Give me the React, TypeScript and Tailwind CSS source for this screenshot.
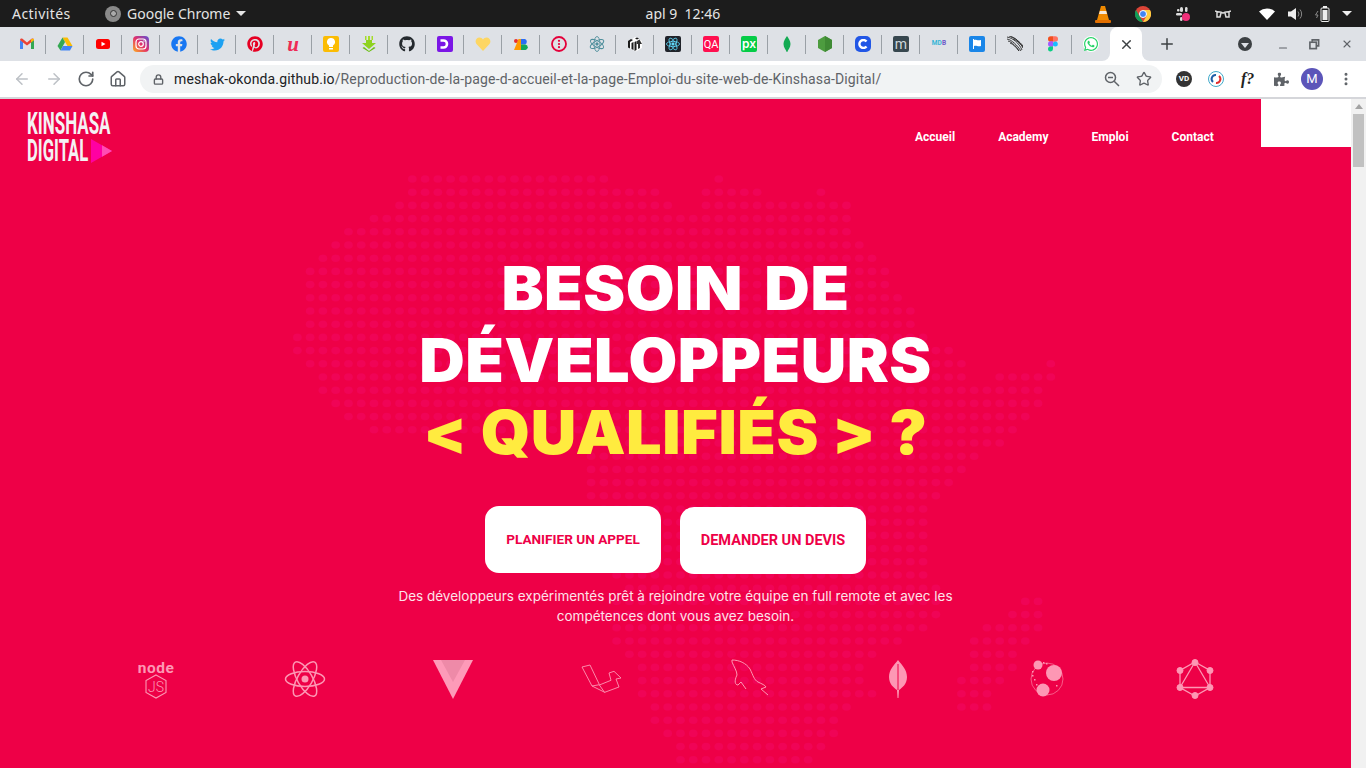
import type { ReactNode } from "react";
import { ArrowLeft, ArrowRight, RotateCw, House, Lock, Star, X, Plus, Minus, EllipsisVertical } from "lucide-react";
import { FaFacebook, FaTwitter, FaPinterest, FaGithub, FaWhatsapp, FaPuzzlePiece } from "react-icons/fa";

// [row index, start column, end column] for the dotted world map behind the hero
const dotRows: number[][] = [
  [0, 0, 15], [0, 24, 24],
  [1, 0, 19], [1, 23, 27], [1, 32, 32],
  [2, -1, 20], [2, 23, 34],
  [3, -3, 34], [4, -5, 34], [5, -6, 35], [6, -7, 36], [7, -8, 37], [8, -8, 37], [9, -8, 38],
  [10, -8, 39], [11, -8, 39], [12, -9, 40], [13, -9, 42],
  [14, -8, 43], [14, 50, 50],
  [15, -7, 43], [15, 46, 50],
  [16, -7, 49], [17, -6, 49], [18, -5, 48], [19, -3, 47], [20, 14, 46], [21, 14, 44], [22, 14, 43], [23, 14, 42], [24, 14, 41],
  [25, 15, 40], [26, 15, 40], [27, 16, 40], [28, 16, 40], [29, 16, 40], [30, 16, 40],
  [31, 17, 41],
  [32, 16, 41], [32, 48, 49],
  [33, 15, 41], [33, 47, 49],
  [34, 16, 40], [34, 45, 49],
  [35, 16, 38], [35, 44, 48],
  [36, 17, 36], [36, 44, 47],
  [37, 18, 35], [37, 44, 47],
  [38, 18, 35], [38, 43, 46],
  [39, 18, 36], [39, 43, 45],
  [40, 19, 34], [40, 43, 45],
  [41, 19, 33], [42, 20, 33], [43, 21, 32], [44, 21, 31],
];

function DotMap() {
  const dots: ReactNode[] = [];
  dotRows.forEach(([row, from, to]) => {
    for (let k = from; k <= to; k++) {
      dots.push(<ellipse key={`${row}-${k}`} cx={412.3 + k * 12.77} cy={80 + row * 13.2} rx={4.4} ry={3.8} />);
    }
  });
  return (
    <svg className="absolute left-0 top-0" width="1351" height="669" fill="#f00456">
      {dots}
    </svg>
  );
}

const Box = ({ children, bg }: { children: ReactNode; bg: string }) => (
  <span className={`flex h-4 w-4 items-center justify-center overflow-hidden rounded-[2px] ${bg}`}>{children}</span>
);

const favicons: ReactNode[] = [
  <svg key="gmail" width="16" height="16" viewBox="0 0 16 16">
    <path d="M1 13V4l3 2v7z" fill="#4285f4" />
    <path d="M12 13V6l3-2v9z" fill="#34a853" />
    <path d="M1 4c0-1.500 1.500-2 2.500-1.200L8 6.500l4.500-3.700C13.500 2 15 2.500 15 4l-3 2.500-4 3-4-3z" fill="#ea4335" />
    <path d="M12 3.200 15 2.800V4l-3 2.500z" fill="#fbbc04" />
  </svg>,
  <svg key="drive" width="16" height="16" viewBox="0 0 16 16">
    <path d="M5.500 1.500h5L15.500 10h-5z" fill="#fbbc04" />
    <path d="M5.500 1.500 8 6 3.500 14.500.5 10z" fill="#34a853" />
    <path d="M3.500 14.500 6 10h9.500L13 14.500z" fill="#4285f4" />
  </svg>,
  <svg key="yt" width="16" height="16" viewBox="0 0 16 16">
    <rect x="1" y="3" width="14" height="10" rx="2.500" fill="#f00" />
    <path d="M6.500 5.800v4.400L10.500 8z" fill="#fff" />
  </svg>,
  <svg key="ig" width="16" height="16" viewBox="0 0 16 16">
    <defs>
      <linearGradient id="ig" x1="0" y1="1" x2="1" y2="0">
        <stop offset="0" stopColor="#fdb022" />
        <stop offset="0.5" stopColor="#e1306c" />
        <stop offset="1" stopColor="#5b51d8" />
      </linearGradient>
    </defs>
    <rect width="16" height="16" rx="4" fill="url(#ig)" />
    <rect x="3" y="3" width="10" height="10" rx="3" fill="none" stroke="#fff" strokeWidth="1.200" />
    <circle cx="8" cy="8" r="2.300" fill="none" stroke="#fff" strokeWidth="1.200" />
    <circle cx="11" cy="5" r=".7" fill="#fff" />
  </svg>,
  <FaFacebook key="fb" size={16} color="#1877f2" />,
  <FaTwitter key="tw" size={15} color="#1da1f2" />,
  <FaPinterest key="pin" size={16} color="#e60023" />,
  <span key="u" className="font-['Liberation_Serif',serif] text-[21px] font-bold italic leading-4 text-[#ee2b55]">u</span>,
  <Box key="keep" bg="bg-[#fbbc04]">
    <svg width="10" height="12" viewBox="0 0 10 12" fill="#fff">
      <path d="M5 0a4 4 0 0 0-2 7.500V9h4V7.500A4 4 0 0 0 5 0zM3 10h4v1.500H3z" />
    </svg>
  </Box>,
  <svg key="dl" width="16" height="16" viewBox="0 0 16 16">
    <path d="M4 0h1.500v4H4zM7 0h2v4H7zM10.500 0H12v4h-1.500z" fill="#a6dc2c" />
    <path d="M5 4h6v3h4l-7 6-7-6h4z" fill="#8ed21f" />
    <path d="M3 11l5 4 5-4 1.500 1L8 16l-6.500-4z" fill="#6cbf12" />
  </svg>,
  <FaGithub key="gh" size={16} color="#24292e" />,
  <Box key="dp" bg="bg-[#7b16e6]">
    <svg width="12" height="12" viewBox="0 0 12 12" fill="none" stroke="#fff" strokeWidth="2.600">
      <path d="M1.500 2.500h3a3.500 3.500 0 0 1 0 7h-3" />
    </svg>
  </Box>,
  <svg key="heart" width="16" height="16" viewBox="0 0 16 16">
    <path d="M8 15 1.500 8C-.5 5.500 1 1.500 4.500 1.500 6 1.500 7.300 2.300 8 3.500 8.700 2.300 10 1.500 11.500 1.500 15 1.500 16.500 5.500 14.500 8z" fill="#fdd663" />
  </svg>,
  <svg key="jb" width="16" height="16" viewBox="0 0 16 16">
    <circle cx="3" cy="5" r="2" fill="#ea2e2e" />
    <path d="M1 14 5.500 3H8v11z" fill="#ff9a00" />
    <path d="M8 3h4a3 3 0 0 1 0 5.500H8z" fill="#2a6df4" />
    <path d="M8 8.500h4.500a2.800 2.800 0 0 1 0 5.500H8z" fill="#13a85c" />
  </svg>,
  <svg key="opt" width="16" height="16" viewBox="0 0 16 16">
    <circle cx="8" cy="8" r="7" fill="none" stroke="#e4003a" strokeWidth="1.800" />
    <circle cx="8" cy="4.800" r="1.100" fill="#e4003a" />
    <circle cx="8" cy="8" r="1.100" fill="#e4003a" />
    <circle cx="8" cy="11.200" r="1.100" fill="#e4003a" />
  </svg>,
  <svg key="electron" width="16" height="16" viewBox="0 0 16 16" fill="none" stroke="#4f8f9c" strokeWidth=".9">
    <ellipse cx="8" cy="8" rx="7.500" ry="3" transform="rotate(30 8 8)" />
    <ellipse cx="8" cy="8" rx="7.500" ry="3" transform="rotate(-30 8 8)" />
    <ellipse cx="8" cy="8" rx="7.500" ry="3" transform="rotate(90 8 8)" />
    <circle cx="8" cy="8" r="1.200" fill="#4f8f9c" />
  </svg>,
  <svg key="cube" width="16" height="16" viewBox="0 0 16 16">
    <path d="M8 1 15 5v7l-6 3.500L2 12l-1-6z" fill="#fff" />
    <path d="M1 5l3-2 2 1-3 2v6.500L1 11.500zM4.500 7l2-1v8l-2-1zM8 2.500l2-1 2 1-2 1zM7.500 6l2-1v9l-2 1z" fill="#1b1b1b" />
    <path d="M10 5l2.500-1.500L15 8h-2v4l-2 1V8H9.500z" fill="#333" />
  </svg>,
  <Box key="react" bg="bg-[#20232a]">
    <svg width="14" height="14" viewBox="0 0 16 16" fill="none" stroke="#61dafb" strokeWidth=".9">
      <ellipse cx="8" cy="8" rx="7.500" ry="3" />
      <ellipse cx="8" cy="8" rx="7.500" ry="3" transform="rotate(60 8 8)" />
      <ellipse cx="8" cy="8" rx="7.500" ry="3" transform="rotate(120 8 8)" />
      <circle cx="8" cy="8" r="1.400" fill="#61dafb" />
    </svg>
  </Box>,
  <Box key="qa" bg="bg-[#ff0f4f]">
    <span className="font-['Roboto',sans-serif] text-[11px] leading-none text-white">QA</span>
  </Box>,
  <Box key="px" bg="bg-[#05cc47]">
    <span className="font-['Inter',sans-serif] text-[12px] font-semibold leading-none text-white">px</span>
  </Box>,
  <svg key="leaf" width="16" height="16" viewBox="0 0 16 16">
    <path d="M8 0c1.500 2.500 3.500 4.500 3.500 8S9 13.500 8.300 16h-.6C7 13.500 4.500 11.500 4.500 8S6.500 2.500 8 0z" fill="#13aa52" />
  </svg>,
  <svg key="hex" width="16" height="16" viewBox="0 0 16 16">
    <path d="M8 0l7 4v8l-7 4-7-4V4z" fill="#4d9c3f" />
    <path d="M8 0l7 4v8l-7 4z" fill="#3f8a34" />
  </svg>,
  <span key="c" className="flex h-4 w-4 items-center justify-center rounded-[5px] bg-[#2257e6]">
    <svg width="10" height="10" viewBox="0 0 10 10" fill="none" stroke="#fff" strokeWidth="2.400">
      <path d="M8.500 2.500a4 4 0 1 0 0 5" />
    </svg>
  </span>,
  <Box key="m" bg="bg-[#37474f]">
    <span className="font-['Roboto',sans-serif] text-[14px] leading-3 text-[#cfd8dc]">m</span>
  </Box>,
  <span key="mdb" className="flex w-4 justify-center whitespace-nowrap font-['Roboto',sans-serif] text-[6.500px] font-bold tracking-[0.2px]">
    <span className="text-[#33b5d6]">MD</span>
    <span className="text-[#6f57c8]">B</span>
  </span>,
  <Box key="flag" bg="bg-[#1a86e8]">
    <svg width="12" height="12" viewBox="0 0 12 12" fill="#fff">
      <path d="M2 1h1v10H2zM3 2c2-1 3 1 7 0v6c-3 1-5-1-7 0z" />
    </svg>
  </Box>,
  <svg key="lines" width="16" height="16" viewBox="0 0 16 16" fill="none" stroke="#2b2b2b" strokeWidth=".9">
    <path d="M0 1c6 1 12 6 15 13M2 0c6 1 11 6 14 12M0 3c5 1 10 6 14 12M4 1c4 1 9 5 12 9M1 5c4 1 8 5 11 10M6 3c3 1 7 4 10 8M3 7c3 1 6 4 9 8" />
  </svg>,
  <svg key="figma" width="16" height="16" viewBox="0 0 16 16">
    <path d="M3 3a2.700 2.700 0 0 1 2.700-2.700H8v5.400H5.700A2.700 2.700 0 0 1 3 3z" fill="#f24e1e" />
    <path d="M8 .3h2.300a2.700 2.700 0 0 1 0 5.400H8z" fill="#ff7262" />
    <circle cx="10.300" cy="8" r="2.500" fill="#1abcfe" />
    <path d="M3 8a2.700 2.700 0 0 1 2.700-2.700H8v5.400H5.700A2.700 2.700 0 0 1 3 8z" fill="#a259ff" />
    <path d="M5.700 10.500H8V13a2.500 2.500 0 1 1-2.300-2.500z" fill="#0acf83" />
  </svg>,
  <span key="wa" className="flex h-4 w-4 items-center justify-center rounded-full bg-white">
    <FaWhatsapp size={16} color="#25d366" />
  </span>,
];

function TopBar() {
  return (
    <div className="grid h-[27px] grid-cols-[1fr_auto_1fr] items-center bg-[#1c1c1c] font-['Noto_Sans',sans-serif] text-[14px] text-[#e4e4e4]">
      <div className="flex items-center">
        <span className="ml-3 w-[58px] tracking-[0.45px]">Activités</span>
        <span className="ml-[35px] flex h-4 w-4 items-center justify-center rounded-full bg-[#8a8a8a]">
          <span className="h-[7px] w-[7px] rounded-full border border-[#333] bg-[#aaa]" />
        </span>
        <span className="ml-[6px]">Google Chrome</span>
        <span className="ml-[6px] h-0 w-0 border-x-[5px] border-t-[5px] border-x-transparent border-t-[#e4e4e4]" />
      </div>
      <div className="whitespace-pre">apl 9  12:46</div>
      <div className="flex items-center justify-end">
        {/* tray icons */}
        <svg className="mr-[24px]" width="16" height="18" viewBox="0 0 16 18">
          <path d="M6 1h4l4 14H2z" fill="#f08a00" />
          <path d="M4.800 6h6.400l.8 3H4z" fill="#f5e9d8" />
          <rect x="0" y="15" width="16" height="3" rx="1" fill="#e36f00" />
        </svg>
        <svg className="mr-[24px]" width="16" height="16" viewBox="0 0 16 16">
          <circle cx="8" cy="8" r="8" fill="#db4437" />
          <path d="M8 16a8 8 0 0 1-7-12l4 7z" fill="#0f9d58" />
          <path d="M8 4h7a8 8 0 0 1-7 12l3.500-6z" fill="#ffcd40" />
          <circle cx="8" cy="8" r="3.500" fill="#4285f4" stroke="#fff" />
        </svg>
        <svg className="mr-[24px]" width="16" height="16" viewBox="0 0 16 16">
          <rect x="5" y="1" width="3" height="5" rx="1.500" fill="#ddd" />
          <rect x="1" y="7" width="6" height="2.500" rx="1.200" fill="#ddd" />
          <rect x="2" y="3" width="2.500" height="2.500" rx="1" fill="#ddd" />
          <rect x="10" y="1" width="2.500" height="5" rx="1.200" fill="#ddd" />
          <rect x="5" y="11" width="2.500" height="4" rx="1.200" fill="#ddd" />
          <circle cx="11" cy="11" r="4" fill="#f0307a" />
        </svg>
        <svg className="mr-[28px]" width="16" height="10" viewBox="0 0 16 10" fill="none" stroke="#ddd" strokeWidth="1.500">
          <path d="M0 2c2 1 3 1 5 1 2 0 2 1 3 1s1-1 3-1c2 0 3 0 5-1M2 3v5h3l1-4M14 3v5h-3l-1-4" />
        </svg>
        <svg className="mr-[13px]" width="16" height="12" viewBox="0 0 16 12">
          <path d="M0 3.500a12 12 0 0 1 16 0L8 12z" fill="#fff" />
        </svg>
        <svg className="mr-[12px]" width="15" height="14" viewBox="0 0 15 14" fill="none">
          <path d="M0 4.500h3L8 1v12L3 9.500H0z" fill="#eee" />
          <path d="M10 4.500a4 4 0 0 1 0 5M12 2.500a7 7 0 0 1 0 9" stroke="#888" />
        </svg>
        <svg className="mr-[12px]" width="15" height="16" viewBox="0 0 15 16" fill="none">
          <path d="M3 5 0.500 9H3L1.500 12" stroke="#888" />
          <rect x="6" y="2" width="8" height="13.500" rx="1" stroke="#eee" />
          <rect x="8" y="0" width="4" height="2" fill="#eee" />
          <rect x="7.500" y="4" width="5" height="10" fill="#eee" />
        </svg>
        <span className="mr-[14px] h-0 w-0 border-x-[5px] border-t-[5px] border-x-transparent border-t-[#eee]" />
      </div>
    </div>
  );
}

function TabStrip() {
  return (
    <div className="flex h-[34px] items-stretch bg-[#dee1e6] pl-2">
      {favicons.map((icon, i) => (
        <div key={i} className="relative flex w-[38px] items-center justify-center">
          {icon}
          {i < favicons.length - 1 && <span className="absolute right-0 top-2 h-[19px] w-px bg-[#9aa0a6]" />}
        </div>
      ))}
      <div className="relative flex w-[32px] items-center justify-center rounded-t-lg bg-white">
        {/* flared bottom corners */}
        <span className="absolute -left-2 bottom-0 h-2 w-2 bg-white">
          <span className="block h-2 w-2 rounded-br-lg bg-[#dee1e6]" />
        </span>
        <span className="absolute -right-2 bottom-0 h-2 w-2 bg-white">
          <span className="block h-2 w-2 rounded-bl-lg bg-[#dee1e6]" />
        </span>
        <X size={15} strokeWidth={2.200} color="#3c4043" />
      </div>
      <div className="ml-4 flex w-[18px] items-center justify-center">
        <Plus size={18} strokeWidth={2} color="#3c4043" />
      </div>
      <div className="ml-[62px] flex w-[14px] items-center">
        <span className="flex h-[14px] w-[14px] items-center justify-center rounded-full bg-[#3c4043]">
          <span className="mt-[2px] h-0 w-0 border-x-[4px] border-t-[5px] border-x-transparent border-t-[#dee1e6]" />
        </span>
      </div>
      <div className="ml-[25px] flex w-3 items-center pt-[8px]">
        <Minus size={14} strokeWidth={2.200} color="#5f6368" />
      </div>
      <div className="ml-[20px] flex w-3 items-center">
        <svg width="11" height="11" viewBox="0 0 12 12" fill="none" stroke="#5f6368" strokeWidth="1.800">
          <path d="M3.500 3V1h7v6.500H8" />
          <rect x="1" y="3.500" width="7" height="7" />
        </svg>
      </div>
      <div className="ml-[20px] flex w-3 items-center">
        <X size={16} strokeWidth={2.200} color="#5f6368" />
      </div>
    </div>
  );
}

function Toolbar() {
  return (
    <div className="flex h-[38px] items-center border-b-2 border-[#d5d6da] bg-white">
      <ArrowLeft className="ml-[13px]" size={18} strokeWidth={2} color="#bdc1c6" />
      <ArrowRight className="ml-[14px]" size={18} strokeWidth={2} color="#bdc1c6" />
      <RotateCw className="ml-[14px]" size={18} strokeWidth={2.200} color="#5f6368" />
      <House className="ml-[14px]" size={18} strokeWidth={2} color="#5f6368" />
      <div className="ml-[13px] flex h-7 w-[1022px] items-center rounded-full bg-[#f1f3f4]">
        <Lock className="ml-[13px]" size={11} strokeWidth={3} color="#5f6368" />
        <div className="ml-[10px] font-['Roboto',sans-serif] text-[14px] tracking-[0.14px] text-[#5f6368]">
          <span className="text-[#202124]">meshak-okonda.github.io</span>/Reproduction-de-la-page-d-accueil-et-la-page-Emploi-du-site-web-de-Kinshasa-Digital/
        </div>
        <div className="ml-auto flex items-center">
          <svg width="16" height="16" viewBox="0 0 16 16" fill="none" stroke="#5f6368" strokeWidth="1.500">
            <circle cx="6.500" cy="6.500" r="5" />
            <path d="M4 6.500h5M10.200 10.200 15 15" />
          </svg>
          <Star className="ml-4 mr-[10px]" size={16} strokeWidth={2} color="#5f6368" />
        </div>
      </div>
      <span className="ml-[14px] flex h-4 w-4 items-center justify-center rounded-full bg-[#333] font-['Roboto',sans-serif] text-[8px] font-bold text-white">VD</span>
      <svg className="ml-4" width="16" height="16" viewBox="0 0 16 16" fill="none">
        <circle cx="8" cy="8" r="7.500" stroke="#3fa9c9" />
        <path d="M5 11a4 4 0 0 1 3-7" stroke="#1f5fa8" strokeWidth="2" />
        <path d="M11 5a4 4 0 0 1-3 7" stroke="#e22d2d" strokeWidth="2" />
      </svg>
      <span className="ml-[17px] w-[15px] font-['Liberation_Serif',serif] text-[16px] font-bold italic text-[#222]">f?</span>
      <FaPuzzlePiece className="ml-[18px]" size={15} color="#5f6368" />
      <span className="ml-3 flex h-[22px] w-[22px] items-center justify-center rounded-full bg-[#5c55b9] font-['Roboto',sans-serif] text-[13px] text-white">M</span>
      <EllipsisVertical className="ml-[15px]" size={16} strokeWidth={2.500} color="#5f6368" />
    </div>
  );
}

const techIcons: ReactNode[] = [
  <svg key="node" width="40" height="40" viewBox="0 0 40 40" fill="none" stroke="#fd97b4">
    <text x="20" y="14" textAnchor="middle" fill="#fd97b4" stroke="none" fontFamily="Roboto, sans-serif" fontWeight="700" fontSize="15.500" letterSpacing="0.5">node</text>
    <path d="M20 16l10 5.500v12L20 39l-10-5.500v-12z" strokeWidth="1.100" />
    <text x="20" y="32.500" textAnchor="middle" fill="#fd97b4" stroke="none" fontFamily="Roboto, sans-serif" fontWeight="300" fontSize="14">JS</text>
  </svg>,
  <svg key="react" width="42" height="40" viewBox="0 0 42 40" fill="none" stroke="#fd97b4" strokeWidth="1.500">
    <ellipse cx="21" cy="20" rx="19.500" ry="7.500" />
    <ellipse cx="21" cy="20" rx="19.500" ry="7.500" transform="rotate(60 21 20)" />
    <ellipse cx="21" cy="20" rx="19.500" ry="7.500" transform="rotate(120 21 20)" />
    <circle cx="21" cy="20" r="3.500" fill="#fd97b4" stroke="none" />
  </svg>,
  <svg key="vue" width="40" height="40" viewBox="0 0 40 40">
    <path d="M0 1h40L20 40z" fill="#fd9ab8" />
    <path d="M8 1h24L20 23z" fill="#ee8aa8" />
  </svg>,
  <svg key="laravel" width="40" height="30" viewBox="0 0 40 30" fill="none" stroke="#fd97b4" strokeWidth=".9">
    <path d="M1 3l8-2 9.400 19.700L11 22zM11 22l12.700 6.300L38 23l-3-8 5-1-7-6.700-5 1.700 2 7.300-11.600 4.700 5.300 7.600" />
  </svg>,
  <svg key="mysql" width="40" height="40" viewBox="0 0 40 40" fill="none" stroke="#fd97b4" strokeWidth="1">
    <path d="M2 1C9 1 16 4 20 10c3 6 4 11 8 13 4 2 7 3 8 5l-5 2 7 6M2 1v2c2 5 5 9 5 13-3 6-2 10 1 10l3-3 5 7" />
  </svg>,
  <svg key="mongo" width="20" height="40" viewBox="0 0 20 40">
    <path d="M10 1c4 5 9 10 9 17 0 7-5 11-8 13l-.5 8h-1L9 31c-3-2-8-6-8-13C1 11 6 6 10 1z" fill="#fd97b4" />
    <path d="M10 5v26" stroke="#ee0047" strokeWidth="1" />
  </svg>,
  <svg key="apollo" width="40" height="40" viewBox="0 0 40 40" fill="#fd97b4">
    <circle cx="21" cy="20" r="16" fill="none" stroke="#fd97b4" strokeWidth=".6" />
    <circle cx="12" cy="6" r="4.500" />
    <circle cx="28" cy="14" r="8" />
    <circle cx="17" cy="31" r="6.500" />
    <path d="M6 12h1.500v1.500H6zM6 16h1.500v1.500H6zM8 20h1.500v1.500H8zM10 25h1.500v1.500H10zM17 3h1.500v1.500H17zM20 4h1.500v1.500H20zM30 26h1.500v1.500H30z" />
  </svg>,
  <svg key="graphql" width="40" height="40" viewBox="0 0 40 40" fill="#fd97b4" stroke="#fd97b4">
    <path d="M20 3l15 8.500v17L20 37 5 28.500v-17zM20 3l15 25.500H5z" fill="none" strokeWidth="1.300" />
    <circle cx="20" cy="3.500" r="3" />
    <circle cx="35" cy="11.500" r="3" />
    <circle cx="35" cy="28.500" r="3" />
    <circle cx="20" cy="36.500" r="3" />
    <circle cx="5" cy="28.500" r="3" />
    <circle cx="5" cy="11.500" r="3" />
  </svg>,
];

function Hero() {
  return (
    <main className="relative h-[669px] flex-1 overflow-hidden bg-[#ee0047]">
      <DotMap />
      <div className="absolute right-0 top-0 h-12 w-[90px] bg-white" />
      <div className="relative">
        <header className="flex h-12 items-start">
          <div className="ml-[27px] mt-[11px] w-[90px] font-['Roboto',sans-serif] text-[32px] font-bold leading-[27px] text-[#f4f1f3]">
            <div className="origin-left scale-x-[0.53] whitespace-nowrap">KINSHASA</div>
            <div className="flex items-center">
              <span className="w-[63px] origin-left scale-x-[0.52] whitespace-nowrap">DIGITAL</span>
              <svg className="ml-px" width="21" height="24" viewBox="0 0 21 24">
                <path d="M0 0l21 12L0 24z" fill="#ff00a2" />
                <path d="M11 6.300 21 12l-10 5.700z" fill="#ff4db4" />
              </svg>
            </div>
          </div>
          <nav className="ml-[798px] mt-[31px] flex gap-[43px] font-['Roboto',sans-serif] text-[12px] font-bold leading-[14px] text-white">
            <a>Accueil</a>
            <a>Academy</a>
            <a>Emploi</a>
            <a>Contact</a>
          </nav>
        </header>

        <h1 className="mt-[105px] scale-x-[1.05] text-center font-['Inter',sans-serif] text-[60px] font-black leading-[72px] tracking-[0.5px] text-white">
          <span className="[word-spacing:8px]">BESOIN DE</span>
          <br />
          DÉVELOPPEURS
          <br />
          <span className="text-[#ffeb3f]">&lt; QUALIFIÉS &gt; ?</span>
        </h1>

        <div className="mt-[38px] flex justify-center gap-[19px] font-['Roboto',sans-serif] font-bold text-[#ee0047]">
          <button className="h-[67px] w-[176px] rounded-[14px] bg-white text-[13.600px]">PLANIFIER UN APPEL</button>
          <button className="mt-px h-[67px] w-[186px] rounded-[14px] bg-white text-[14.500px]">DEMANDER UN DEVIS</button>
        </div>

        <p className="mt-[12px] text-center font-['Inter',sans-serif] text-[13.500px] leading-5 text-[#fde3ea]">
          Des développeurs expérimentés prêt à rejoindre votre équipe en full remote et avec les
          <br />
          compétences dont vous avez besoin.
        </p>

        <div className="mx-auto mt-[33px] grid h-10 w-[1187px] grid-cols-8 items-center justify-items-center">
          {techIcons}
        </div>
      </div>
    </main>
  );
}

export default function App() {
  return (
    <div className="h-[768px] w-[1366px] overflow-hidden bg-white">
      <TopBar />
      <TabStrip />
      <Toolbar />
      <div className="flex">
        <Hero />
        {/* scrollbar */}
        <aside className="h-[669px] w-[15px] bg-[#f1f1f1] pl-[2px] pt-[5px]">
          <div className="ml-[2px] h-0 w-0 border-x-[4px] border-b-[5px] border-x-transparent border-b-[#a3a3a3]" />
          <div className="mt-[5px] h-[53px] w-[11px] bg-[#c1c1c1]" />
        </aside>
      </div>
    </div>
  );
}
